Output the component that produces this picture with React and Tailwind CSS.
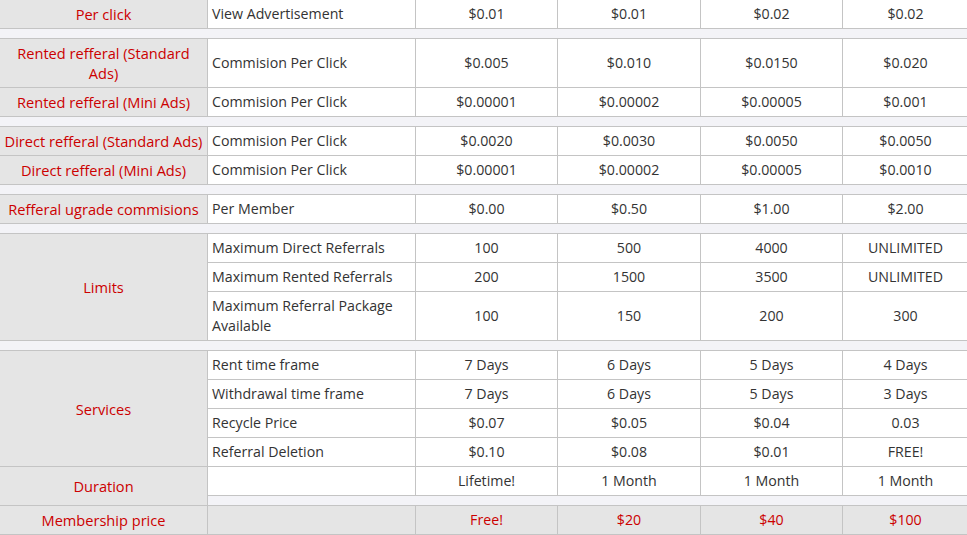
import React from "react";

const labelCell =
  "border border-[#c4c4c4] bg-[#e5e5e5] text-[#cc0000] text-[14.6px] text-center px-1 py-1 align-middle";
const descCell = "border border-[#c4c4c4] bg-white text-[#333] text-left px-[4px] py-1";
const valCell = "border border-[#c4c4c4] bg-white text-[#333] text-center px-1 py-1";

const Spacer = ({ cols = 6 }) => (
  <tr>
    <td colSpan={cols} className="h-[10px] p-0 border border-[#c4c4c4] bg-[#f3f3f7]" />
  </tr>
);

// simple row: label, description, four values
const Row = ({ label, desc, values }) => (
  <tr>
    <td className={labelCell}>{label}</td>
    <td className={descCell}>{desc}</td>
    {values.map((v, i) => (
      <td key={i} className={valCell}>
        {v}
      </td>
    ))}
  </tr>
);

// group with one label spanning several rows
const Group = ({ label, rows }) => (
  <>
    {rows.map((r, i) => (
      <tr key={i}>
        {i === 0 && (
          <td rowSpan={rows.length} className={labelCell}>
            {label}
          </td>
        )}
        <td className={descCell}>{r.desc}</td>
        {r.values.map((v, j) => (
          <td key={j} className={valCell}>
            {v}
          </td>
        ))}
      </tr>
    ))}
  </>
);

export default function App() {
  return (
    <div className="w-[967px] h-[535px] overflow-hidden bg-white">
      <table
        className="-mt-px -ml-px w-[969px] border-collapse table-fixed text-[14.2px] leading-[20px]"
        style={{ fontFamily: '"Open Sans", "Liberation Sans", sans-serif' }}
      >
        <colgroup>
          <col className="w-[208px]" />
          <col className="w-[208px]" />
          <col className="w-[142px]" />
          <col className="w-[143px]" />
          <col className="w-[142px]" />
          <col className="w-[126px]" />
        </colgroup>
        <tbody>
          <Row label="Per click" desc="View Advertisement" values={["$0.01", "$0.01", "$0.02", "$0.02"]} />
          <Spacer />
          <Row
            label={
              <>
                Rented refferal (Standard
                <br />
                Ads)
              </>
            }
            desc="Commision Per Click"
            values={["$0.005", "$0.010", "$0.0150", "$0.020"]}
          />
          <Row
            label="Rented refferal (Mini Ads)"
            desc="Commision Per Click"
            values={["$0.00001", "$0.00002", "$0.00005", "$0.001"]}
          />
          <Spacer />
          <Row
            label="Direct refferal (Standard Ads)"
            desc="Commision Per Click"
            values={["$0.0020", "$0.0030", "$0.0050", "$0.0050"]}
          />
          <Row
            label="Direct refferal (Mini Ads)"
            desc="Commision Per Click"
            values={["$0.00001", "$0.00002", "$0.00005", "$0.0010"]}
          />
          <Spacer />
          <Row
            label="Refferal ugrade commisions"
            desc="Per Member"
            values={["$0.00", "$0.50", "$1.00", "$2.00"]}
          />
          <Spacer />
          <Group
            label="Limits"
            rows={[
              { desc: "Maximum Direct Referrals", values: ["100", "500", "4000", "UNLIMITED"] },
              { desc: "Maximum Rented Referrals", values: ["200", "1500", "3500", "UNLIMITED"] },
              { desc: "Maximum Referral Package Available", values: ["100", "150", "200", "300"] },
            ]}
          />
          <Spacer />
          <Group
            label="Services"
            rows={[
              { desc: "Rent time frame", values: ["7 Days", "6 Days", "5 Days", "4 Days"] },
              { desc: "Withdrawal time frame", values: ["7 Days", "6 Days", "5 Days", "3 Days"] },
              { desc: "Recycle Price", values: ["$0.07", "$0.05", "$0.04", "0.03"] },
              { desc: "Referral Deletion", values: ["$0.10", "$0.08", "$0.01", "FREE!"] },
            ]}
          />
          <tr>
            <td rowSpan={2} className={labelCell}>
              Duration
            </td>
            <td className={descCell}></td>
            {["Lifetime!", "1 Month", "1 Month", "1 Month"].map((v, i) => (
              <td key={i} className={valCell}>
                {v}
              </td>
            ))}
          </tr>
          <Spacer cols={5} />
          <tr>
            <td className={labelCell}>Membership price</td>
            <td className="border border-[#c4c4c4] bg-[#e5e5e5] px-1 py-1"></td>
            {["Free!", "$20", "$40", "$100"].map((v, i) => (
              <td key={i} className="border border-[#c4c4c4] bg-[#e5e5e5] text-[#cc0000] text-center px-1 py-1">
                {v}
              </td>
            ))}
          </tr>
        </tbody>
      </table>
    </div>
  );
}
